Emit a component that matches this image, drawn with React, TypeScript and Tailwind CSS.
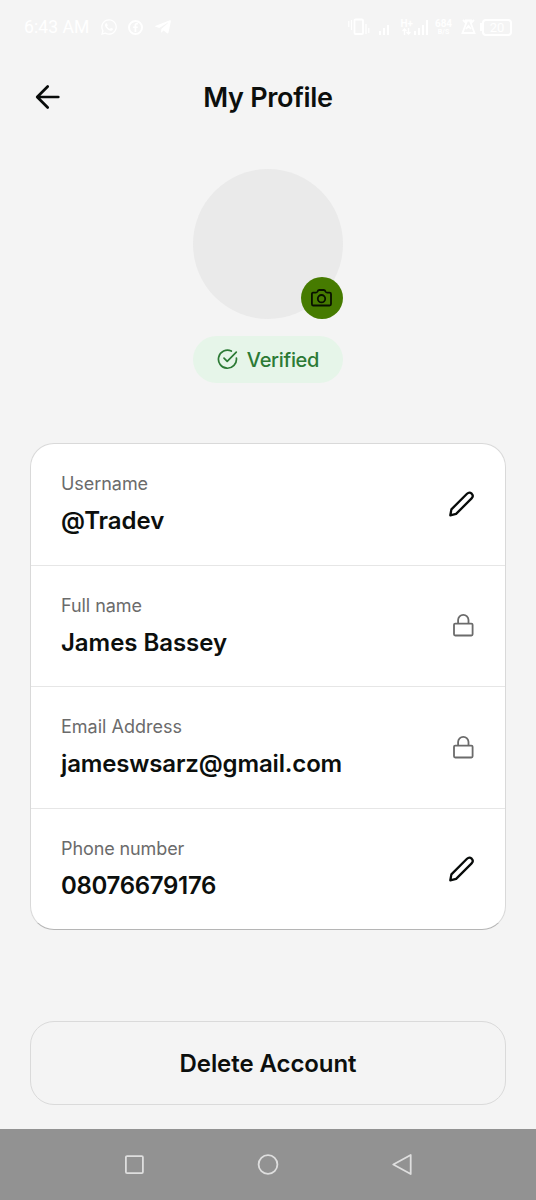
import React from 'react';
import { FaWhatsapp, FaTelegramPlane, FaFacebookF } from 'react-icons/fa';

type Field = {
  label: string;
  value: string;
  editable: boolean;
  valueClass: string;
  labelClass: string;
};

const fields: Field[] = [
  { label: 'Username', value: '@Tradev', editable: true, labelClass: 'tracking-[-0.05px]', valueClass: 'tracking-[-0.05px]' },
  { label: 'Full name', value: 'James Bassey', editable: false, labelClass: 'tracking-[-0.05px]', valueClass: 'tracking-[-0.05px]' },
  { label: 'Email Address', value: 'jameswsarz@gmail.com', editable: false, labelClass: 'tracking-[0px]', valueClass: 'tracking-[-0.15px]' },
  { label: 'Phone number', value: '08076679176', editable: true, labelClass: 'tracking-[-0.1px]', valueClass: 'tracking-[-0.32px]' }
];

const SignalBars = ({ bars = 4 }: { bars?: number }) => (
  <svg width="15" height="15" viewBox="0 0 15 15" fill="currentColor">
    <rect x="0" y="11" width="2" height="4" />
    <rect x="4" y="8" width="2" height="7" />
    <rect x="8" y="5" width="2" height="10" />
    {bars > 3 && <rect x="12" y="0" width="2" height="15" />}
  </svg>
);

const StatusBar = () => (
  <div className="flex h-[54px] items-center justify-between pl-6 pr-6 font-[Roboto,sans-serif] text-white">
    <div className="flex items-center">
      <span className="w-[65px] whitespace-nowrap pt-0.5 text-[17.5px] leading-none tracking-[0.1px]">6:43 AM</span>
      <FaWhatsapp className="ml-[11px] h-[18px] w-[18px]" />
      <span className="ml-[10px] flex h-[15px] w-[15px] items-center justify-center rounded-full border-2 border-white">
        <FaFacebookF className="h-[9px] w-[9px]" />
      </span>
      <FaTelegramPlane className="ml-[11px] h-[18px] w-[18px]" />
    </div>
    <div className="flex items-center">
      <svg width="22" height="18" viewBox="0 0 22 18" fill="none" stroke="currentColor" strokeWidth="1.8">
        <rect x="6.5" y="1.5" width="8.5" height="14.5" rx="1" />
        <path d="M.8 3v6M3.500 2v10M18 6v10M20.800 10v5" strokeWidth="1.2" />
      </svg>
      <span className="ml-[9px]">
        <SignalBars bars={3} />
      </span>
      <span className="ml-[6px] flex flex-col items-center text-[10px] font-bold leading-[9px]">
        <span>H+</span>
        <svg width="9" height="7" viewBox="0 0 9 7" fill="none" stroke="currentColor" strokeWidth="1.4">
          <path d="M2.500 7V1M.5 3l2-2 2 2M6.500 0v6M4.500 4l2 2 2-2" />
        </svg>
      </span>
      <span className="ml-px">
        <SignalBars />
      </span>
      <span className="ml-[5px] flex w-[19px] flex-col items-center font-bold">
        <span className="text-[10px] leading-[10px]">684</span>
        <span className="text-[7px] leading-[7px]">B/S</span>
      </span>
      <svg className="ml-[8px]" width="15" height="16" viewBox="0 0 15 16" fill="none" stroke="currentColor" strokeWidth="1.8">
        <path d="M2 1l3 3M13 1l-3 3M4 1.500h7M6 2L1.500 14h12L9 2M5 10l2.500-3L10 10" />
      </svg>
      <span className="ml-[4px] h-2 w-[2px] bg-white" />
      <span className="flex h-[17px] w-[30px] items-center justify-center rounded-[4px] border-2 border-white text-[13px] leading-none">
        20
      </span>
    </div>
  </div>
);

const PencilIcon = () => (
  <svg width="26" height="26" viewBox="0 0 26 26" fill="none" stroke="#080b0a" strokeWidth="2.3" strokeLinejoin="round">
    <path d="M2.300 24.300L3.400 18.400L19 2.800C20.400 1.400 22.300 1.400 23.700 2.700C25 4.100 25 6 23.600 7.400L8.100 22.900Z" />
  </svg>
);

const LockIcon = () => (
  <svg width="21" height="23" viewBox="0 0 21 23" fill="none" stroke="#6b6b6b" strokeWidth="1.8">
    <rect x="1" y="9.600" width="18.600" height="11.900" rx="1.200" />
    <path d="M5.100 9.600V6.100a5.200 5.200 0 0 1 10.400 0v3.500" />
  </svg>
);

const ProfileRow = ({ field }: { field: Field }) => (
  <div className="flex flex-1 items-center justify-between border-t border-[#e6e6e6] pl-[30px] pr-[31px] first:border-t-0">
    <div className="pt-px">
      <p className={`text-[18px] leading-6 text-[#6b6b6b] ${field.labelClass}`}>{field.label}</p>
      <p className={`mt-[9px] text-[24px] font-semibold leading-8 text-[#0c0f0d] ${field.valueClass}`}>{field.value}</p>
    </div>
    {field.editable ? <PencilIcon /> : <LockIcon />}
  </div>
);

const Avatar = () => (
  <div className="relative h-[150px] w-[150px] rounded-full bg-[#eaeaea]">
    <button className="absolute bottom-0 right-0 flex h-[42px] w-[42px] items-center justify-center rounded-full bg-[#467b00]">
      <svg width="22" height="18" viewBox="0 0 22 18" fill="none" stroke="#081000" strokeWidth="1.8" strokeLinejoin="round">
        <path d="M2 3.600H4.700Q6 3.600 6.500 2.500Q7.100 1 8.300 1H12.700Q13.900 1 14.500 2.500Q15 3.600 16.300 3.600H18.500Q20 3.600 20 5.100V15Q20 16.500 18.500 16.500H2Q.9 16.500 .9 15V5.100Q.9 3.600 2 3.600Z" />
        <circle cx="10.500" cy="9.700" r="3.700" />
      </svg>
    </button>
  </div>
);

const NavigationBar = () => (
  <div className="flex h-[71px] items-center justify-between bg-[#929292] pl-[124px] pr-[123px] text-[#dedede]">
    <svg width="20" height="20" viewBox="0 0 20 20" fill="none" stroke="currentColor" strokeWidth="1.8">
      <rect x="1.900" y="1.100" width="17" height="17" rx="1.200" />
    </svg>
    <svg width="22" height="22" viewBox="0 0 22 22" fill="none" stroke="currentColor" strokeWidth="1.800">
      <circle cx="11" cy="10.500" r="9.400" />
    </svg>
    <svg width="22" height="22" viewBox="0 0 22 22" fill="none" stroke="currentColor" strokeWidth="1.800" strokeLinejoin="round">
      <path d="M2.300 10.500L19.700 1V20Z" />
    </svg>
  </div>
);

const App = () => {
  return (
    <div className="flex h-[1200px] w-[536px] flex-col overflow-hidden bg-[#f4f4f4] font-[Inter,sans-serif] text-[#0c0f0d]">
      <StatusBar />

      {/* Header */}
      <header className="grid h-[86px] grid-cols-[60px_1fr_60px] items-center px-[34px]">
        <button className="flex">
          <svg width="27" height="27" viewBox="0 0 27 27" fill="none" stroke="#080b0a" strokeWidth="2.700" strokeLinecap="round" strokeLinejoin="round">
            <path d="M24.300 13H3.300M13.700 2.500L3.200 13L13.700 23.500" />
          </svg>
        </button>
        <h1 className="pt-0.5 text-center text-[27px] font-semibold leading-8 tracking-[-0.3px]">My Profile</h1>
      </header>

      {/* Avatar and verification state */}
      <section className="mt-[29px] flex flex-col items-center">
        <Avatar />
        <div className="mt-[17px] flex h-[47px] w-[150px] items-center justify-center gap-[9px] rounded-full bg-[#e6f5e9] text-[#2c7a35]">
          <svg width="21" height="21" viewBox="0 0 21 21" fill="none" stroke="currentColor" strokeWidth="1.700" strokeLinecap="round" strokeLinejoin="round">
            <path d="M14.300 2.100A9 9 0 1 0 19.400 9.200" />
            <path d="M7 9.200L10.200 12.400L19.300 3.200" />
          </svg>
          <span className="pt-px text-[20px] font-medium tracking-[-0.3px]">Verified</span>
        </div>
      </section>

      {/* Profile details */}
      <section className="mx-[30px] mt-[60px] flex h-[487px] flex-col rounded-[24px] border border-[#d9d9d9] border-b-[#b5b5b5] bg-white">
        {fields.map((field) => (
          <ProfileRow key={field.label} field={field} />
        ))}
      </section>

      <button className="mx-[30px] mt-[91px] h-[84px] rounded-[24px] border border-[#dadada] pt-0.5 text-[24px] font-semibold tracking-[-0.08px]">
        Delete Account
      </button>

      <div className="mt-auto">
        <NavigationBar />
      </div>
    </div>
  );
};

export default App;
